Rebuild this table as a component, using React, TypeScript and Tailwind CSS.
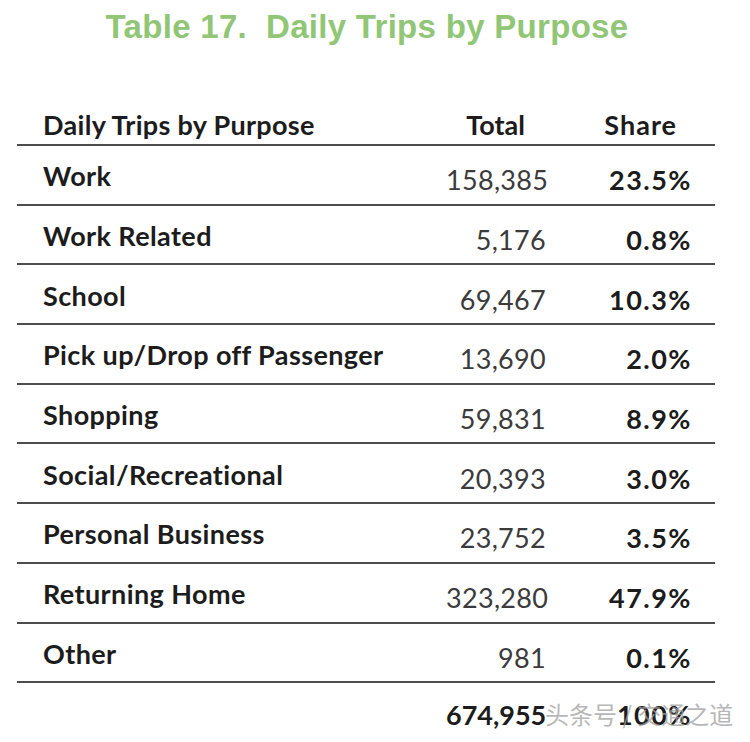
type Row = {
  purpose: string
  total: string
  share: string
}

const rows: Row[] = [
  { purpose: 'Work', total: '158,385', share: '23.5%' },
  { purpose: 'Work Related', total: '5,176', share: '0.8%' },
  { purpose: 'School', total: '69,467', share: '10.3%' },
  { purpose: 'Pick up/Drop off Passenger', total: '13,690', share: '2.0%' },
  { purpose: 'Shopping', total: '59,831', share: '8.9%' },
  { purpose: 'Social/Recreational', total: '20,393', share: '3.0%' },
  { purpose: 'Personal Business', total: '23,752', share: '3.5%' },
  { purpose: 'Returning Home', total: '323,280', share: '47.9%' },
  { purpose: 'Other', total: '981', share: '0.1%' },
]

const grid = 'grid grid-cols-[429px_100px_146px] ml-[17px] w-[698px]'

export default function App() {
  return (
    <div className="relative w-[750px] h-[742px] bg-white overflow-hidden font-['Lato',sans-serif]">
      <h1 className="pt-[2px] pr-[16px] h-[108px] text-center text-[33px] font-bold tracking-[0.3px] text-[#90c676] font-['Liberation_Sans',Arial,sans-serif]">
        Table 17.&nbsp; Daily Trips by Purpose
      </h1>

      <div className={`${grid} h-[38px] items-end pb-[6px] border-b-2 border-[#4d4d4d] text-[27px] font-bold text-[#1c1c1c]`}>
        <div className="pl-[26px] leading-none tracking-[0.3px]">Daily Trips by Purpose</div>
        <div className="text-right pr-[21px] leading-none">Total</div>
        <div className="text-right pr-[15px] leading-none tracking-[1px]">Share</div>
      </div>

      {rows.map(row => (
        <div key={row.purpose} className={`${grid} h-[59.7px] items-center border-b-2 border-[#4d4d4d] text-[27px]`}>
          <div className="pl-[26px] pt-[2px] font-bold text-[#1c1c1c] leading-none tracking-[0.4px]">{row.purpose}</div>
          <div className="text-right pt-[10px] text-[#3b3b3b] leading-none tracking-[0.3px]">{row.total}</div>
          <div className="text-right pt-[10px] font-bold text-[#1c1c1c] leading-none tracking-[1.5px]">{row.share}</div>
        </div>
      ))}

      <div className={`${grid} h-[58px] items-center text-[27px] font-bold text-[#1c1c1c]`}>
        <div />
        <div className="text-right pt-[4px] leading-none">674,955</div>
        <div className="text-right pt-[4px] leading-none tracking-[1.5px]">100%</div>
      </div>

      <div className="absolute left-[545px] top-[702px] whitespace-nowrap text-[24px] leading-none text-[#a0a0a0]/75 font-['Noto_Sans_CJK_SC',sans-serif]">
        头条号 / 交通之道
      </div>
    </div>
  )
}
